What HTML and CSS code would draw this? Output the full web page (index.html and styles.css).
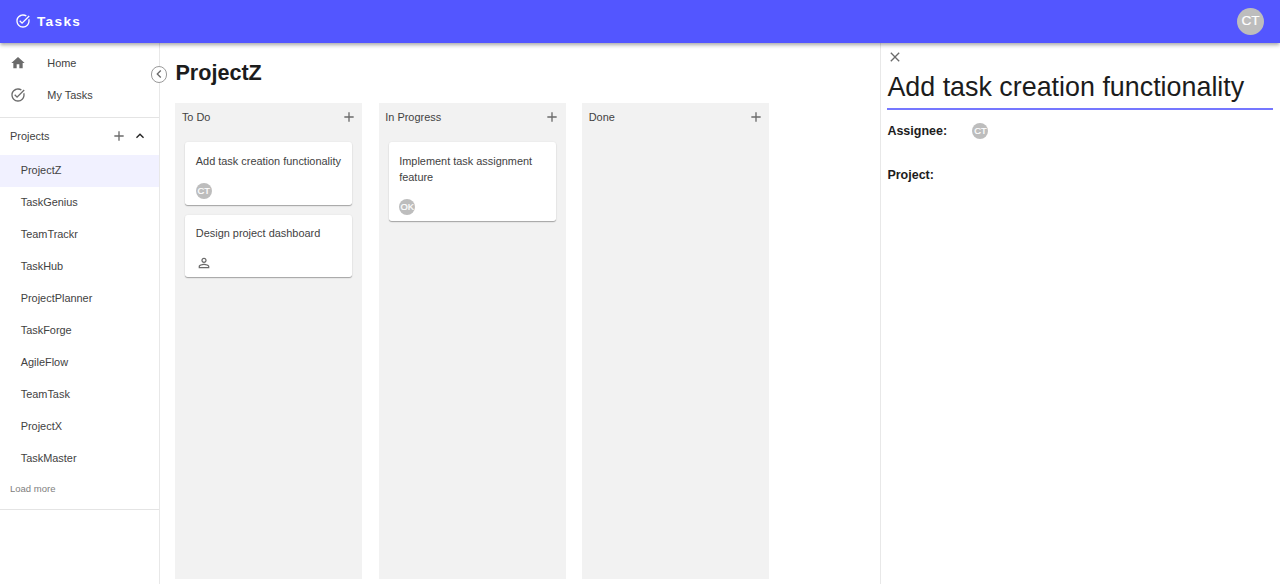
FILE: index.html
```html
<!DOCTYPE html>
<html lang="en">
<head>
<meta charset="utf-8">
<title>Tasks</title>
<link rel="stylesheet" href="styles.css">
</head>
<body>
<svg class="defs" aria-hidden="true">
  <symbol id="check" viewBox="0 0 24 24"><path d="M22 5.18 10.59 16.6l-4.24-4.24 1.41-1.41 2.83 2.83 10-10L22 5.18zm-2.21 5.04c.13.57.21 1.17.21 1.78 0 4.42-3.58 8-8 8s-8-3.58-8-8 3.58-8 8-8c1.58 0 3.04.46 4.28 1.25l1.44-1.44C16.1 2.67 14.13 2 12 2 6.48 2 2 6.48 2 12s4.48 10 10 10 10-4.48 10-10c0-1.19-.22-2.33-.6-3.39l-1.61 1.61z"/></symbol>
  <symbol id="home" viewBox="0 0 24 24"><path d="M10 20v-6h4v6h5v-8h3L12 3 2 12h3v8z"/></symbol>
  <symbol id="add" viewBox="0 0 24 24"><path d="M19 13h-6v6h-2v-6H5v-2h6V5h2v6h6z"/></symbol>
  <symbol id="up" viewBox="0 0 24 24"><path d="m12 8-6 6 1.41 1.41L12 10.83l4.59 4.58L18 14z"/></symbol>
  <symbol id="left" viewBox="0 0 24 24"><path d="M15.41 7.41 14 6l-6 6 6 6 1.41-1.41L10.83 12z"/></symbol>
  <symbol id="close" viewBox="0 0 24 24"><path d="M19 6.41 17.59 5 12 10.59 6.41 5 5 6.41 10.59 12 5 17.59 6.41 19 12 13.41 17.59 19 19 17.59 13.41 12z"/></symbol>
  <symbol id="person" viewBox="0 0 24 24"><path d="M12 5.9c1.16 0 2.1.94 2.1 2.1s-.94 2.1-2.1 2.1S9.9 9.16 9.9 8s.94-2.1 2.1-2.1m0 9c2.97 0 6.1 1.46 6.1 2.1v1.1H5.9V17c0-.64 3.13-2.1 6.1-2.1M12 4C9.79 4 8 5.79 8 8s1.79 4 4 4 4-1.79 4-4-1.79-4-4-4zm0 9c-2.67 0-8 1.34-8 4v3h16v-3c0-2.66-5.33-4-8-4z"/></symbol>
</svg>

<header class="topbar">
  <svg class="icon"><use href="#check"/></svg>
  <span class="brand">Tasks</span>
  <span class="avatar avatar-large">CT</span>
</header>

<div class="layout">
  <aside class="sidebar">
    <nav class="main-nav">
      <a class="nav-item"><svg class="icon"><use href="#home"/></svg>Home</a>
      <a class="nav-item"><svg class="icon"><use href="#check"/></svg>My Tasks</a>
    </nav>
    <section class="projects">
      <div class="projects-head">
        <span class="projects-title">Projects</span>
        <svg class="icon"><use href="#add"/></svg>
        <svg class="icon icon-dark"><use href="#up"/></svg>
      </div>
      <ul class="project-list">
        <li class="project selected">ProjectZ</li>
        <li class="project">TaskGenius</li>
        <li class="project">TeamTrackr</li>
        <li class="project">TaskHub</li>
        <li class="project">ProjectPlanner</li>
        <li class="project">TaskForge</li>
        <li class="project">AgileFlow</li>
        <li class="project">TeamTask</li>
        <li class="project">ProjectX</li>
        <li class="project">TaskMaster</li>
      </ul>
      <div class="load-more">Load more</div>
    </section>
    <span class="collapse"><svg class="icon"><use href="#left"/></svg></span>
  </aside>

  <main class="board">
    <h1 class="board-title">ProjectZ</h1>
    <div class="columns">
      <section class="column">
        <div class="column-head">To Do<svg class="icon"><use href="#add"/></svg></div>
        <article class="card"><p class="card-text">Add task creation functionality</p><span class="avatar">CT</span></article>
        <article class="card"><p class="card-text">Design project dashboard</p><svg class="icon"><use href="#person"/></svg></article>
      </section>
      <section class="column">
        <div class="column-head">In Progress<svg class="icon"><use href="#add"/></svg></div>
        <article class="card"><p class="card-text">Implement task assignment feature</p><span class="avatar">OK</span></article>
      </section>
      <section class="column">
        <div class="column-head">Done<svg class="icon"><use href="#add"/></svg></div>
      </section>
    </div>
  </main>

  <aside class="details">
    <svg class="icon"><use href="#close"/></svg>
    <div class="task-name">Add task creation functionality</div>
    <div class="field"><span class="field-label">Assignee:</span><span class="avatar">CT</span></div>
    <div class="field"><span class="field-label">Project:</span></div>
  </aside>
</div>
</body>
</html>
```
FILE: styles.css
```css
* { box-sizing: border-box; }
body {
  margin: 0;
  height: 584px;
  overflow: hidden;
  display: flex;
  flex-direction: column;
  background: #fff;
  color: #424242;
  font: 10.93px/16px "Liberation Sans", Arial, sans-serif;
}
.defs { position: absolute; width: 0; height: 0; }
.icon { width: 16px; height: 16px; flex: none; display: block; fill: #6b6b6b; }
.icon-dark { fill: #222; }

.topbar {
  height: 42.5px;
  flex: none;
  display: flex;
  align-items: center;
  padding: 0 16px 0 15px;
  background: #5356ff;
  box-shadow: 0 1.3px 2.7px -0.7px rgba(0,0,0,.2), 0 2.7px 3.3px rgba(0,0,0,.14), 0 .7px 6.7px rgba(0,0,0,.12);
  z-index: 1;
}
.topbar .icon { fill: #fff; }
.brand { margin-left: 6px; padding-top: 1px; color: #fff; font-size: 13.6px; font-weight: 700; letter-spacing: 1.33px; }
.avatar {
  display: flex;
  align-items: center;
  justify-content: center;
  width: 16px;
  height: 16px;
  border-radius: 50%;
  background: #bdbdbd;
  color: #fff;
  font-size: 9.33px;
  -webkit-text-stroke: .2px #fff;
}
.avatar-large { width: 27px; height: 27px; margin-left: auto; font-size: 13.6px; }

.layout { flex: 1; min-height: 0; display: flex; }
.sidebar { position: relative; width: 159.5px; flex: none; border-right: 1px solid #e8e8e8; }
.main-nav { padding: 4.6px 0 5.9px; border-bottom: 1px solid #e4e4e4; }
.nav-item { display: flex; align-items: center; height: 32px; padding-left: 10px; gap: 21.3px; }
.projects { border-bottom: 1px solid #e4e4e4; padding-bottom: 12px; }
.projects-head { display: flex; align-items: center; height: 37px; padding: 0 10.5px 1px 10px; gap: 5.3px; }
.projects-title { margin-right: auto; }
.project-list { margin: 0; padding: 0; list-style: none; }
.project { height: 32px; line-height: 31px; padding-left: 20.7px; }
.selected { background: #f1f1ff; }
.load-more { padding: 6.5px 0 0 10px; height: 22px; line-height: 16px; font-size: 9.5px; color: #808080; }
.collapse {
  position: absolute;
  top: 23.6px;
  right: -8.5px;
  width: 16.5px;
  height: 16.5px;
  display: flex;
  align-items: center;
  justify-content: center;
  border: 1px solid #999;
  border-radius: 50%;
  background: #fff;
}

.board { flex: 1; display: flex; flex-direction: column; padding: 16.3px 15.9px 5.5px; }
.board-title { margin: 0; height: 44.5px; line-height: 28px; font-size: 21.6px; color: #1c1c1c; }
.columns { flex: 1; display: flex; gap: 16.6px; }
.column { width: 186.8px; padding: 0 9.8px; background: #f2f2f2; }
.column-head {
  display: flex;
  justify-content: space-between;
  height: 28px;
  margin: 0 -4.6px 11.2px -3.3px;
  align-items: center;
}
.card {
  margin-bottom: 9.8px;
  padding: 10.2px 10.6px 5.6px;
  border-radius: 2.67px;
  background: #fff;
  box-shadow: 0 1px 1px rgba(0,0,0,.28), 0 .5px 2px rgba(0,0,0,.08);
}
.card-text { margin: 0 0 14.5px; }

.details { width: 400.3px; flex: none; padding: 6.6px 6.7px; border-left: 1px solid #e8e8e8; }
.task-name {
  height: 44.8px;
  padding-top: 6px;
  line-height: 32px;
  font-size: 26.87px;
  color: #1c1c1c;
  border-bottom: 2px solid #7577ff;
  margin-bottom: 12.9px;
}
.field { display: flex; align-items: center; height: 16px; margin-bottom: 28px; color: #1c1c1c; font-size: 12.5px; font-weight: 700; }
.field .avatar { font-weight: 400; }
.field-label { width: 85px; }
```
